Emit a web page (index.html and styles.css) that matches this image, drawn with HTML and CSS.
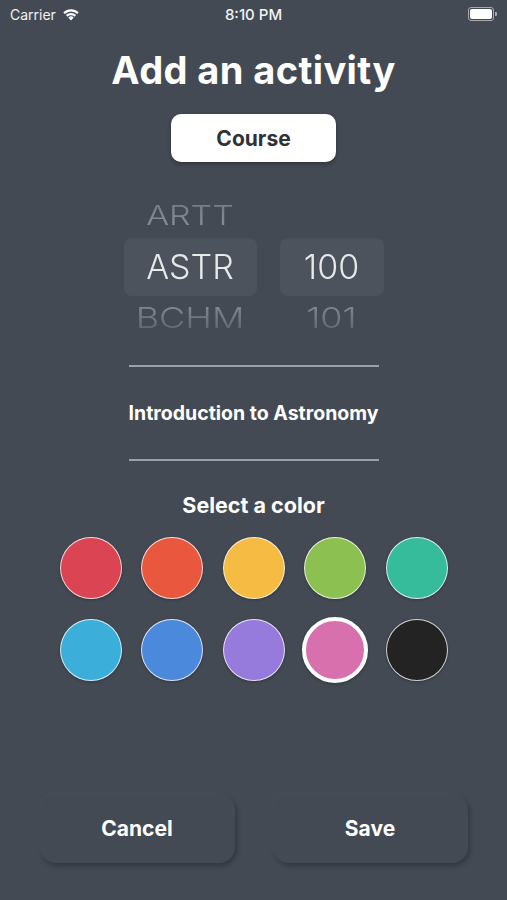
FILE: index.html
```html
<!DOCTYPE html>
<html lang="en">
<head>
    <meta charset="UTF-8">
    <meta name="viewport" content="width=device-width, initial-scale=1.0">
    <title>Add an activity</title>
    <link rel="stylesheet" href="styles.css">
</head>
<body>

<!-- Status bar -->
<div class="status-bar">
    <div class="carrier">
        Carrier
        <svg class="wifi" width="18" height="13" viewBox="0 0 18 13">
            <path d="M9 12.5 L6.3 9.6 A3.9 3.9 0 0 1 11.7 9.6 Z" fill="#fff"/>
            <path d="M3.9 7.1 A7.3 7.3 0 0 1 14.1 7.1 L12.6 8.7 A5.2 5.2 0 0 0 5.4 8.7 Z" fill="#fff"/>
            <path d="M1.3 4.4 A11 11 0 0 1 16.7 4.4 L15.2 6 A8.8 8.8 0 0 0 2.8 6 Z" fill="#fff"/>
        </svg>
    </div>
    <div class="clock">8:10 PM</div>
    <div class="battery">
        <div class="battery-body"><div class="battery-level"></div></div>
        <div class="battery-tip"></div>
    </div>
</div>

<div class="page">
    <h1 class="title">Add an activity</h1>

    <button class="type-btn">Course</button>

    <!-- Course picker -->
    <div class="picker">
        <div class="wheel wheel-subject">
            <div class="wheel-item faded top">ARTT</div>
            <div class="wheel-item selected">ASTR</div>
            <div class="wheel-item faded bottom">BCHM</div>
        </div>
        <div class="wheel wheel-number">
            <div class="wheel-item faded top"></div>
            <div class="wheel-item selected">100</div>
            <div class="wheel-item faded bottom">101</div>
        </div>
    </div>

    <div class="course-name">
        <div class="rule"></div>
        <div class="course-title">Introduction to Astronomy</div>
        <div class="rule"></div>
    </div>

    <div class="color-label">Select a color</div>

    <div class="colors">
        <div class="swatch" style="background:#da4453"></div>
        <div class="swatch" style="background:#e9573f"></div>
        <div class="swatch" style="background:#f6bb42"></div>
        <div class="swatch" style="background:#8cc152"></div>
        <div class="swatch" style="background:#37bc9b"></div>
        <div class="swatch" style="background:#3bafda"></div>
        <div class="swatch" style="background:#4a89dc"></div>
        <div class="swatch" style="background:#967adc"></div>
        <div class="swatch active" style="background:#d770ad"></div>
        <div class="swatch" style="background:#232323"></div>
    </div>

    <div class="actions">
        <button class="action-btn">Cancel</button>
        <button class="action-btn">Save</button>
    </div>
</div>

</body>
</html>
```

FILE: styles.css
```css
body {
    margin: 0;
    padding: 0;
    width: 507px;
    height: 900px;
    background-color: #434a54;
    font-family: Inter, "Liberation Sans", sans-serif;
    color: #fff;
    overflow: hidden;
}

.status-bar {
    height: 28px;
    display: flex;
    align-items: center;
    justify-content: space-between;
    padding: 0 10px;
    font-size: 14px;
    color: #f2f2f2;
    position: relative;
}

.carrier {
    display: flex;
    align-items: center;
    gap: 6px;
}

.clock {
    position: absolute;
    left: 50%;
    transform: translateX(-50%);
    font-weight: 500;
    font-size: 15px;
}

.battery {
    display: flex;
    align-items: center;
}

.battery-body {
    width: 22px;
    height: 10px;
    border: 1px solid #aaa;
    border-radius: 3px;
    padding: 1px;
}

.battery-level {
    width: 100%;
    height: 100%;
    background-color: #fff;
    border-radius: 2px;
}

.battery-tip {
    width: 2px;
    height: 4px;
    background-color: #aaa;
    border-radius: 0 1px 1px 0;
    margin-left: 1px;
}

.page {
    display: flex;
    flex-direction: column;
    align-items: center;
}

.title {
    margin: 20px 0 0;
    font-size: 38px;
    font-weight: 700;
    letter-spacing: 0.4px;
    line-height: 44px;
}

.type-btn {
    margin-top: 22px;
    width: 165px;
    height: 48px;
    border: none;
    border-radius: 10px;
    background-color: #fff;
    color: #2f3338;
    font-family: inherit;
    font-size: 21px;
    font-weight: 700;
    box-shadow: 0 2px 4px rgba(0, 0, 0, 0.3);
}

.picker {
    margin-top: 32px;
    height: 140px;
    display: flex;
    gap: 23px;
    -webkit-mask-image: linear-gradient(to bottom, rgba(0,0,0,0.55), #000 35%, #000 70%, rgba(0,0,0,0.3));
}

.wheel {
    display: grid;
    grid-template-rows: 44px 58px 38px;
}

.wheel-subject {
    width: 133px;
}

.wheel-number {
    width: 104px;
}

.wheel-item {
    display: flex;
    align-items: center;
    justify-content: center;
    font-weight: 300;
    font-size: 34px;
    line-height: 1;
    color: #e6e8ea;
}

.wheel-item.selected {
    background-color: #4c535d;
    border-radius: 8px;
}

.wheel-item.faded {
    font-size: 34px;
    color: #959aa1;
}

.wheel-item.top {
    transform: scaleY(0.78);
}

.wheel-item.bottom {
    align-items: flex-start;
    padding-top: 4px;
    font-size: 36px;
    transform: scaleY(0.8);
}

.course-name {
    margin-top: 31px;
    width: 250px;
    display: flex;
    flex-direction: column;
    align-items: center;
}

.rule {
    width: 100%;
    height: 2px;
    background-color: #9aa0a8;
}

.course-title {
    height: 92px;
    display: flex;
    align-items: center;
    font-size: 19.5px;
    font-weight: 700;
    white-space: nowrap;
}

.color-label {
    margin-top: 31px;
    font-size: 21.5px;
    font-weight: 700;
}

.colors {
    margin-top: 19px;
    display: grid;
    grid-template-columns: repeat(5, 62px);
    column-gap: 19.5px;
    row-gap: 20px;
}

.swatch {
    width: 62px;
    height: 62px;
    box-sizing: border-box;
    border-radius: 50%;
    border: 1.5px solid rgba(255, 255, 255, 0.8);
    box-shadow: 0 1px 3px rgba(0, 0, 0, 0.25);
}

.swatch.active {
    width: 66px;
    height: 66px;
    margin: -2px;
    border: 4px solid #fff;
}

.actions {
    margin-top: 113px;
    display: flex;
    gap: 38px;
}

.action-btn {
    width: 195px;
    height: 69px;
    border: none;
    border-radius: 16px;
    background-color: #434a54;
    color: #fff;
    font-family: inherit;
    font-size: 21px;
    font-weight: 700;
    box-shadow: 2px 3px 5px rgba(0, 0, 0, 0.25), -1px -1px 3px rgba(255, 255, 255, 0.04);
}
```
